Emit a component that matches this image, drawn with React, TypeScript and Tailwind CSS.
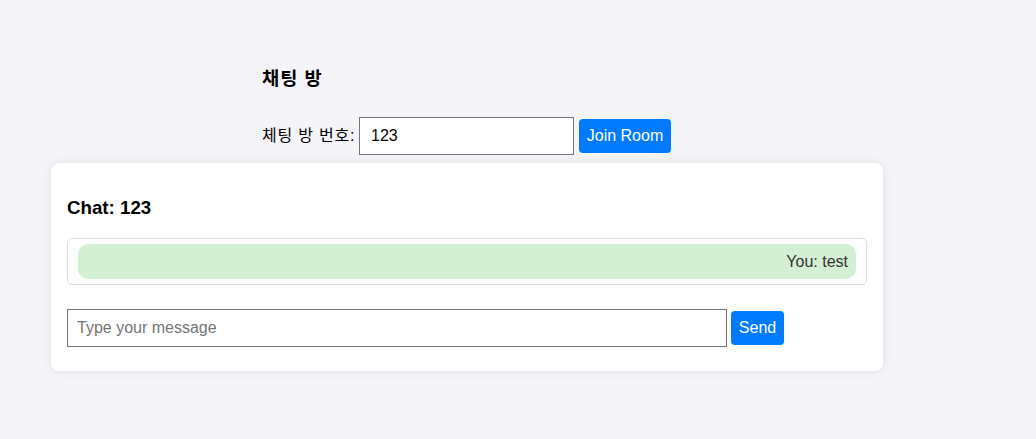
import React from "react";

export default function App() {
  return (
    <div className="min-h-[439px] w-full bg-[#f4f4f9] font-['Liberation_Sans','Noto_Sans_CJK_KR',Arial,sans-serif] text-black">
      <div className="pl-[262px] pt-[68px]">
        <h3 className="text-[18.72px] font-bold leading-[22px] tracking-[1px]">채팅 방</h3>
        <div className="mt-[27px] flex items-center">
          <label className="w-[93px] text-[16px] leading-[18px] tracking-[0.8px] whitespace-nowrap">체팅 방 번호:</label>
          <input
            className="ml-[4px] h-[38px] w-[215px] border border-[#767676] bg-white px-[11px] text-[16px] text-black outline-none"
            defaultValue="123"
          />
          <button className="ml-[5px] h-[34px] w-[92px] rounded-[4px] bg-[#007bff] text-[16px] text-white">
            Join Room
          </button>
        </div>
      </div>
      <div className="ml-[51px] mt-[8px] w-[832px] rounded-lg bg-white px-4 pb-6 pt-4 shadow-[0_0_10px_rgba(0,0,0,0.1)]">
        <h3 className="mt-[18px] mb-[19px] text-[18.72px] font-bold leading-[22px]">Chat: 123</h3>
        <div className="rounded-[5px] border border-[#dddddd] px-[10px] py-[5px]">
          <div className="rounded-[10px] bg-[#d4f0d4] p-2 text-right text-[16px] leading-[19px] text-[#333333]">
            You: test
          </div>
        </div>
        <div className="mt-[24px] flex items-center">
          <input
            className="h-[38px] w-[660px] border border-[#767676] bg-white px-[9px] text-[16px] outline-none placeholder:text-[#757575]"
            placeholder="Type your message"
          />
          <button className="ml-[4px] h-[34px] w-[53px] rounded-[4px] bg-[#007bff] text-[16px] text-white">
            Send
          </button>
        </div>
      </div>
    </div>
  );
}
